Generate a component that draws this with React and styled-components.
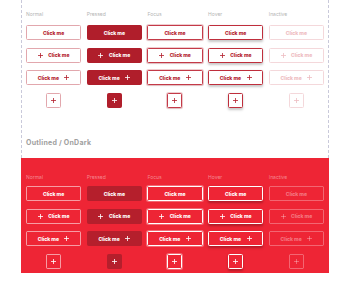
import React from 'react';
import styled, { createGlobalStyle, css } from 'styled-components';

const GlobalStyle = createGlobalStyle`
    body {
        margin: 0;
        background: #ffffff;
        font-family: Inter, "Liberation Sans", sans-serif;
    }
`

const STATES = ['Normal', 'Pressed', 'Focus', 'Hover', 'Inactive'];

const Plus = () => (
    <svg width="5" height="5" viewBox="0 0 5 5">
        <path d="M2.5 0v5M0 2.5h5" stroke="currentColor" strokeWidth="0.8" fill="none" />
    </svg>
)

const Section = ({ tone }) => (
    <>
        <LabelRow $tone={tone}>
            {STATES.map(s => <Label key={s} $tone={tone}>{s}</Label>)}
        </LabelRow>
        <ButtonGrid>
            {STATES.map(s => (
                <Button key={'a' + s} $tone={tone} $state={s}>Click me</Button>
            ))}
            {STATES.map(s => (
                <Button key={'b' + s} $tone={tone} $state={s}><Plus />Click me</Button>
            ))}
            {STATES.map(s => (
                <Button key={'c' + s} $tone={tone} $state={s}>Click me<Plus /></Button>
            ))}
            {STATES.map(s => (
                <IconButton key={'d' + s} $tone={tone} $state={s}><Plus /></IconButton>
            ))}
        </ButtonGrid>
    </>
)

const App = () => {
    return (
        <Page>
            <GlobalStyle />
            <Frame>
                <Section tone="light" />
                <Title>Outlined / OnDark</Title>
            </Frame>
            <DarkPanel>
                <Section tone="dark" />
            </DarkPanel>
        </Page>
    )
}

export default App;

const Page = styled.div`
    padding-left: 21px;
    width: 308px;
`

const Frame = styled.div`
    border-left: 1px dashed #c9c9da;
    border-right: 1px dashed #c9c9da;
    padding: 11px 4px 11px 4px;
`

const DarkPanel = styled.div`
    background: #ee2535;
    padding: 16.4px 5px 4.3px 5px;
`

const Title = styled.div`
    margin-top: 31px;
    font-size: 7px;
    line-height: 8px;
    font-weight: 700;
    letter-spacing: 0.25px;
    color: #a0a0a0;
`

const LabelRow = styled.div`
    display: grid;
    grid-template-columns: repeat(5, 1fr);
    column-gap: 5.5px;
    margin-bottom: ${({ $tone }) => ($tone === 'dark' ? '5.6px' : '8px')};
`

const Label = styled.div`
    font-size: 5px;
    line-height: 6px;
    color: ${({ $tone }) => ($tone === 'dark' ? 'rgba(255,255,255,0.45)' : '#b4b4b4')};
`

const ButtonGrid = styled.div`
    display: grid;
    grid-template-columns: repeat(5, 1fr);
    column-gap: 5.5px;
    row-gap: 7.7px;
`

const lightStates = {
    Normal: css`
        background: #fff;
        color: #b3202d;
        border: 1px solid #e2a7ad;
    `,
    Pressed: css`
        background: #b01e2b;
        color: #fff;
        border: 1px solid #b01e2b;
    `,
    Focus: css`
        background: #fff;
        color: #b3202d;
        border: 1px solid #c43a48;
        box-shadow: 0 0 0 1px rgba(196, 58, 72, 0.25), 0 1px 2px rgba(0, 0, 0, 0.1);
    `,
    Hover: css`
        background: #fff;
        color: #b3202d;
        border: 1px solid #bf2e3c;
        box-shadow: 0 1.5px 2.5px rgba(0, 0, 0, 0.22);
    `,
    Inactive: css`
        background: #fff;
        color: #eebcc1;
        border: 1px solid #f4d8db;
    `,
}

const darkStates = {
    Normal: css`
        background: transparent;
        color: #fff;
        border: 1px solid rgba(255, 255, 255, 0.55);
    `,
    Pressed: css`
        background: #b51f2c;
        color: #fff;
        border: 1px solid #b51f2c;
    `,
    Focus: css`
        background: transparent;
        color: #fff;
        border: 1px solid #fff;
        box-shadow: 0 0 0 1px rgba(255, 255, 255, 0.3);
    `,
    Hover: css`
        background: transparent;
        color: #fff;
        border: 1px solid #fff;
        box-shadow: 0 1.5px 2.5px rgba(0, 0, 0, 0.25);
    `,
    Inactive: css`
        background: transparent;
        color: rgba(255, 255, 255, 0.38);
        border: 1px solid rgba(255, 255, 255, 0.3);
    `,
}

const stateStyle = ({ $tone, $state }) => ($tone === 'dark' ? darkStates : lightStates)[$state];

const Button = styled.button`
    box-sizing: border-box;
    height: 15px;
    padding: 0;
    border-radius: 1.5px;
    display: flex;
    align-items: center;
    justify-content: center;
    gap: 5.5px;
    font-family: Inter, "Liberation Sans", sans-serif;
    font-size: 5px;
    font-weight: 800;
    ${stateStyle}
`

const IconButton = styled(Button)`
    width: 15px;
    justify-self: center;
`
